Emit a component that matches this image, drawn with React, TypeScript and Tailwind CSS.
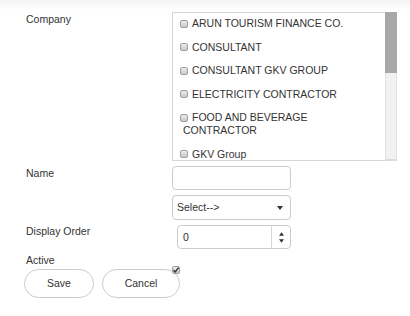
import React from "react";

const items = [
  "ARUN TOURISM FINANCE CO.",
  "CONSULTANT",
  "CONSULTANT GKV GROUP",
  "ELECTRICITY CONTRACTOR",
  "FOOD AND BEVERAGE CONTRACTOR",
  "GKV Group",
];

function Box({ checked = false }: { checked?: boolean }) {
  return (
    <span className="relative inline-block w-[8px] h-[8px] align-[-0.5px] rounded-[2px] border border-[#a0a0a0] bg-gradient-to-b from-[#ececec] to-[#c8c8c8]">
      {checked && (
        <svg viewBox="0 0 8 8" className="absolute left-[-1px] top-[-1px] w-[8px] h-[8px]">
          <path d="M1.5 4.2 L3.2 6 L6.6 1.6" stroke="#333" strokeWidth="1.4" fill="none" />
        </svg>
      )}
    </span>
  );
}

export default function App() {
  return (
    <div
      className="w-[410px] h-[316px] overflow-hidden bg-[linear-gradient(to_bottom,#f4f4f4_0px,#ffffff_10px)] text-[#333] text-[10.5px] leading-[13px]"
      style={{ fontFamily: '"Liberation Sans", Arial, sans-serif' }}
    >
      <div className="pt-[12px]">
        {/* Company */}
        <div className="flex">
          <div className="w-[172px] pl-[26px] pt-[1px]">Company</div>
          <div className="flex h-[149px] w-[225px]">
            <div className="w-[213px] h-full border-l border-t border-b border-[#d6d6d6] overflow-hidden pt-[4px] pl-[10px] pr-[14px]">
              {items.map((t) => (
                <div key={t} className="mb-[10.5px]">
                  <span className="ml-[-3px] mr-[4px]">
                    <Box />
                  </span>
                  {t}
                </div>
              ))}
            </div>
            <div className="w-[12px] h-full flex flex-col">
              <div className="h-[61px] bg-[#a8a8a8]" />
              <div className="flex-1 bg-[#f1f1f1] border-x border-[#e3e3e3]" />
              <div className="h-[2px] bg-[#dcdcdc]" />
            </div>
          </div>
        </div>

        {/* Name */}
        <div className="flex mt-[5px]">
          <div className="w-[172px] pl-[26px] pt-[1px]">Name</div>
          <div className="w-[119px] h-[24px] border border-[#cccccc] rounded-[4px] bg-white" />
        </div>

        {/* Select */}
        <div className="flex mt-[5px]">
          <div className="w-[172px]" />
          <div className="w-[119px] h-[25px] border border-[#cccccc] rounded-[4px] bg-white flex items-center pl-[4px] pr-[7px] justify-between">
            <span>Select--&gt;</span>
            <svg viewBox="0 0 6 4" className="w-[6px] h-[4px]">
              <path d="M0 0 L6 0 L3 4 Z" fill="#333" />
            </svg>
          </div>
        </div>

        {/* Display order */}
        <div className="flex mt-[5px]">
          <div className="w-[172px] pl-[26px] pt-[0px]">Display Order</div>
          <div className="ml-[5px] w-[114px] h-[24px] border border-[#cccccc] rounded-[4px] bg-white flex">
            <div className="flex-1 pl-[5px] flex items-center border-r border-[#d6d6d6]">0</div>
            <div className="w-[18px] flex flex-col items-center justify-center gap-[3px]">
              <svg viewBox="0 0 6 4" className="w-[5px] h-[4px]">
                <path d="M0 4 L6 4 L3 0 Z" fill="#333" />
              </svg>
              <svg viewBox="0 0 6 4" className="w-[5px] h-[4px]">
                <path d="M0 0 L6 0 L3 4 Z" fill="#333" />
              </svg>
            </div>
          </div>
        </div>

        {/* Active */}
        <div className="flex mt-[4.5px] h-[15px]">
          <div className="w-[172px] pl-[26px]">Active</div>
          <div className="pt-[10.5px] leading-none">
            <Box checked />
          </div>
        </div>

        {/* Buttons */}
        <div className="flex pl-[24px] mt-[0.5px] gap-[8px]">
          <button className="w-[70px] h-[29px] rounded-full border border-[#cccccc] bg-white text-[#333] text-[10.5px]">
            Save
          </button>
          <button className="w-[78px] h-[29px] rounded-full border border-[#cccccc] bg-white text-[#333] text-[10.5px]">
            Cancel
          </button>
        </div>
      </div>
    </div>
  );
}
